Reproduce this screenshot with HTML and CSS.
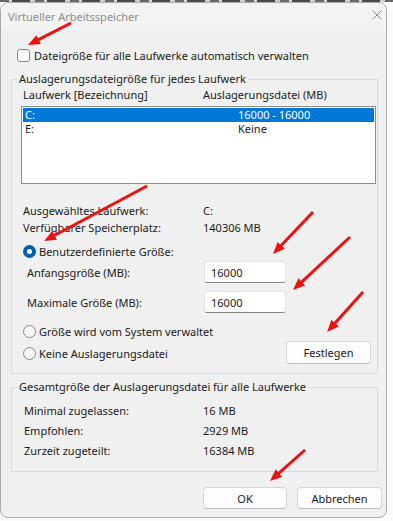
FILE: index.html
```html
<!DOCTYPE html>
<html lang="de">
<head>
    <meta charset="UTF-8">
    <meta name="viewport" content="width=device-width, initial-scale=1.0">
    <title>Virtueller Arbeitsspeicher</title>
    <link rel="stylesheet" href="styles.css">
</head>
<body>
    <div class="backdrop-strip"></div>
    <div class="window">
        <div class="titlebar">
            <span class="title">Virtueller Arbeitsspeicher</span>
            <svg class="close" width="10" height="10" viewBox="0 0 10 10">
                <path d="M0.5 0.5 L9.5 9.5 M9.5 0.5 L0.5 9.5" stroke="#8a8a8a" stroke-width="1" fill="none"/>
            </svg>
        </div>

        <div class="content">
            <label class="check-row">
                <span class="checkbox"></span>
                Dateigröße für alle Laufwerke automatisch verwalten
            </label>

            <!-- Per-drive settings -->
            <fieldset class="group group-drives">
                <legend>Auslagerungsdateigröße für jedes Laufwerk</legend>
                <div class="list-head">
                    <span class="col-drive">Laufwerk [Bezeichnung]</span>
                    <span>Auslagerungsdatei (MB)</span>
                </div>
                <div class="listbox">
                    <div class="list-row selected">
                        <span class="col-name">C:</span>
                        <span>16000 - 16000</span>
                    </div>
                    <div class="list-row">
                        <span class="col-name">E:</span>
                        <span>Keine</span>
                    </div>
                </div>

                <div class="info">
                    <div class="info-row"><span class="info-label">Ausgewähltes Laufwerk:</span><span>C:</span></div>
                    <div class="info-row"><span class="info-label">Verfügbarer Speicherplatz:</span><span>140306 MB</span></div>
                </div>

                <label class="radio-row radio-custom">
                    <span class="radio checked"></span>
                    Benutzerdefinierte Größe:
                </label>
                <div class="field-row">
                    <span class="field-label">Anfangsgröße (MB):</span>
                    <input class="textbox" type="text" value="16000">
                </div>
                <div class="field-row field-max">
                    <span class="field-label">Maximale Größe (MB):</span>
                    <input class="textbox" type="text" value="16000">
                </div>
                <label class="radio-row radio-system">
                    <span class="radio"></span>
                    Größe wird vom System verwaltet
                </label>
                <div class="last-row">
                    <label class="radio-row">
                        <span class="radio"></span>
                        Keine Auslagerungsdatei
                    </label>
                    <button class="btn btn-set">Festlegen</button>
                </div>
            </fieldset>

            <!-- Totals for all drives -->
            <fieldset class="group group-total">
                <legend>Gesamtgröße der Auslagerungsdatei für alle Laufwerke</legend>
                <div class="total-row"><span class="total-label">Minimal zugelassen:</span><span>16 MB</span></div>
                <div class="total-row"><span class="total-label">Empfohlen:</span><span>2929 MB</span></div>
                <div class="total-row"><span class="total-label">Zurzeit zugeteilt:</span><span>16384 MB</span></div>
            </fieldset>

            <div class="dialog-buttons">
                <button class="btn btn-ok">OK</button>
                <button class="btn">Abbrechen</button>
            </div>
        </div>
    </div>

    <!-- Red annotation arrows drawn over the dialog -->
    <svg class="arrows" width="393" height="521" viewBox="0 0 393 521">
        <defs>
            <marker id="head" markerUnits="userSpaceOnUse" markerWidth="12" markerHeight="10" refX="4" refY="5" orient="auto">
                <path d="M0,0 L12,5 L0,10 z" fill="#f01010"/>
            </marker>
        </defs>
        <g stroke="#f01010" stroke-width="3" fill="none" marker-end="url(#head)">
            <line x1="71" y1="23" x2="35.1" y2="41.4"/>
            <line x1="147" y1="186" x2="51.1" y2="237.2"/>
            <line x1="313" y1="212" x2="278.5" y2="248.2"/>
            <line x1="350" y1="237" x2="298.9" y2="284.6"/>
            <line x1="363" y1="292" x2="332.4" y2="326.1"/>
            <line x1="305" y1="450" x2="276" y2="475.7"/>
        </g>
    </svg>
</body>
</html>
```

FILE: styles.css
```css
/* General Reset */
* {
    margin: 0;
    padding: 0;
    box-sizing: border-box;
}

body {
    font-family: "Noto Sans", "DejaVu Sans", sans-serif;
    font-size: 11px;
    color: #1a1a1a;
    background-color: #fbfbfb;
    width: 393px;
    height: 521px;
    overflow: hidden;
    position: relative;
}

.backdrop-strip {
    height: 2px;
    background: repeating-linear-gradient(90deg, #6a6a6a 0 9px, #d8d8d8 9px 12px, #4a4a4a 12px 30px, #cfcfcf 30px 35px);
}

.window {
    width: 387px;
    height: 516px;
    border: 1px solid #aaaaaa;
    border-radius: 8px;
    background-color: #f0f0f0;
    overflow: hidden;
}

.titlebar {
    height: 27px;
    display: flex;
    justify-content: space-between;
    align-items: center;
    padding: 0 4px 0 7px;
    background-color: #f3f3f3;
}

.title {
    color: #8c8c8c;
    font-size: 11px;
}

.close {
    margin-bottom: 3px;
}

/* Checkbox row */
.check-row {
    display: flex;
    align-items: center;
    height: 16px;
    margin-top: 17px;
    padding-left: 16px;
    gap: 4px;
}

.checkbox {
    width: 13px;
    height: 13px;
    border: 1px solid #8a8a8a;
    border-radius: 3px;
    background-color: #fbfbfb;
}

/* Group boxes */
.group {
    border: 1px solid #dadada;
    margin: 0 8px 0 10px;
    padding: 0 1px 9px 9px;
    min-width: 0;
}

.group legend {
    line-height: 14px;
    padding: 0 2px;
    margin-left: -4px;
}

.group-drives {
    margin-top: 9px;
    padding-top: 2px;
}

.list-head {
    display: flex;
    line-height: 14px;
    padding-left: 2px;
}

.col-drive {
    width: 180px;
}

.listbox {
    margin-top: 4px;
    height: 78px;
    border: 1px solid #8d8d8d;
    background-color: #fff;
    padding: 1px;
}

.list-row {
    display: flex;
    height: 14px;
    line-height: 14px;
    padding-left: 2px;
}

.list-row.selected {
    background-color: #0078d7;
    color: #fff;
}

.col-name {
    width: 213px;
}

.info {
    margin-top: 18px;
}

.info-row {
    display: flex;
    line-height: 17px;
    padding-left: 2px;
}

.info-label {
    width: 180px;
}

/* Radio buttons */
.radio-row {
    display: flex;
    align-items: center;
    height: 17px;
    gap: 3px;
    padding-left: 2px;
}

.radio {
    width: 13px;
    height: 13px;
    border: 1px solid #8a8a8a;
    border-radius: 50%;
    background-color: #f7f7f7;
}

.radio.checked {
    border: 4px solid #005fb8;
    background-color: #fff;
}

.radio-custom {
    margin-top: 7px;
}

.radio-system {
    margin-top: 10px;
}

/* Size inputs */
.field-row {
    display: flex;
    align-items: center;
    height: 22px;
    margin-top: 1px;
    padding-left: 6px;
}

.field-max {
    margin-top: 8px;
}

.field-label {
    width: 177px;
}

.textbox {
    width: 82px;
    height: 22px;
    border: 1px solid #e3e3e3;
    border-bottom-color: #868686;
    border-radius: 3px;
    background-color: #fff;
    padding: 0 6px;
    font-family: inherit;
    font-size: 11px;
    color: #1a1a1a;
    outline: none;
}

.last-row {
    display: flex;
    align-items: center;
    height: 23px;
    margin-top: 1px;
}

.last-row .radio-row {
    padding-top: 2px;
}

/* Buttons */
.btn {
    height: 22px;
    border: 1px solid #d6d6d6;
    border-bottom-color: #bcbcbc;
    border-radius: 4px;
    background-color: #fdfdfd;
    font-family: inherit;
    font-size: 11px;
    color: #1a1a1a;
    width: 85px;
}

.btn-set {
    height: 23px;
    margin-left: auto;
    margin-right: 5px;
}

.btn-ok {
    width: 84px;
}

.group-total {
    margin-top: 6px;
    padding-top: 7px;
    padding-bottom: 10px;
}

.total-row {
    display: flex;
    line-height: 20px;
    padding-left: 3px;
}

.total-label {
    width: 179px;
}

.dialog-buttons {
    display: flex;
    justify-content: flex-end;
    gap: 10px;
    margin-top: 15px;
    padding-right: 4px;
}

.arrows {
    position: absolute;
    left: 0;
    top: 0;
    pointer-events: none;
}
```
